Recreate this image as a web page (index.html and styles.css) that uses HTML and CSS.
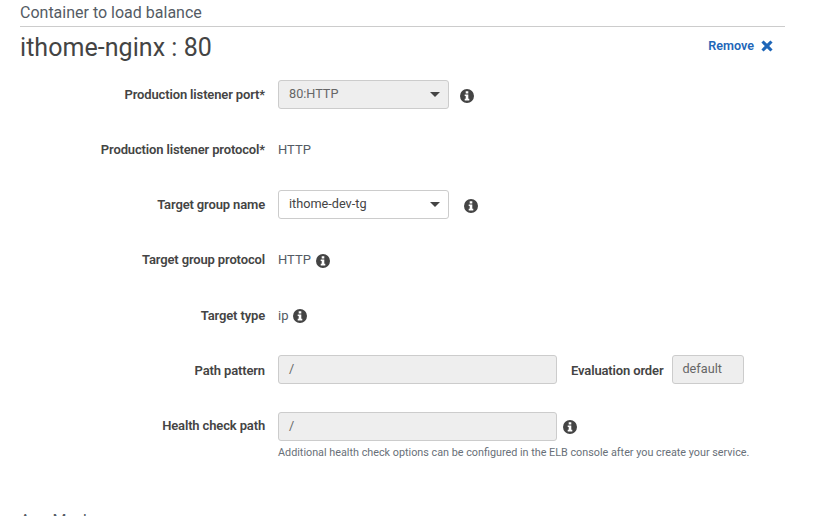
FILE: index.html
```html
<!DOCTYPE html>
<html lang="en">
<head>
  <meta charset="UTF-8">
  <meta name="viewport" content="width=device-width, initial-scale=1.0">
  <title>Container to load balance</title>
  <link rel="stylesheet" href="styles.css">
</head>
<body>
  <svg class="icon-defs" width="0" height="0" aria-hidden="true">
    <symbol id="info" viewBox="0 0 14 14">
      <path fill-rule="evenodd" d="M7 0a7 7 0 1 1 0 14A7 7 0 0 1 7 0zM5.7 2.2v2.2h2.6V2.2zM4.7 5.6v1.5h1v2.6h-1v1.8h4.6V9.7h-1V5.6z"/>
    </symbol>
  </svg>

  <section class="panel">
    <h3 class="panel-title">Container to load balance</h3>

    <div class="panel-head">
      <h2 class="container-name">ithome-nginx : 80</h2>
      <a class="remove" href="#">Remove
        <svg class="remove-icon" viewBox="0 0 12 12"><path d="M2.6 0.4 6 3.8 9.4 0.4 11.6 2.6 8.2 6 11.6 9.4 9.4 11.6 6 8.2 2.6 11.6 0.4 9.4 3.8 6 0.4 2.6z"/></svg>
      </a>
    </div>

    <div class="row row-port">
      <label class="row-label">Production listener port*</label>
      <div class="row-value">
        <div class="control select disabled">80:HTTP<span class="caret"></span></div>
        <svg class="info info-wide info-low"><use href="#info"/></svg>
      </div>
    </div>

    <div class="row row-protocol">
      <label class="row-label">Production listener protocol*</label>
      <div class="row-value">HTTP</div>
    </div>

    <div class="row row-group">
      <label class="row-label">Target group name</label>
      <div class="row-value">
        <div class="control select">ithome-dev-tg<span class="caret"></span></div>
        <svg class="info info-wider info-low"><use href="#info"/></svg>
      </div>
    </div>

    <div class="row row-group-protocol">
      <label class="row-label">Target group protocol</label>
      <div class="row-value">HTTP <svg class="info info-low"><use href="#info"/></svg></div>
    </div>

    <div class="row row-type">
      <label class="row-label">Target type</label>
      <div class="row-value">ip <svg class="info"><use href="#info"/></svg></div>
    </div>

    <div class="row row-path">
      <label class="row-label">Path pattern</label>
      <div class="row-value">
        <div class="control input disabled">/</div>
        <label class="inline-label">Evaluation order</label>
        <div class="control order disabled">default</div>
      </div>
    </div>

    <div class="row row-health">
      <label class="row-label">Health check path</label>
      <div class="row-value">
        <div class="control input disabled">/</div>
        <svg class="info info-health"><use href="#info"/></svg>
      </div>
    </div>
    <p class="help">Additional health check options can be configured in the ELB console after you create your service.</p>

    <h3 class="next-title">App Mesh</h3>
  </section>
</body>
</html>
```

FILE: styles.css
```css
html, body {
  height: 516px;
  overflow: hidden;
}
body {
  margin: 0;
  background: #fff;
  color: #444;
  font-family: Roboto, "Liberation Sans", sans-serif;
  font-size: 13px;
}
.icon-defs {
  display: block;
}
.panel {
  width: 765px;
  margin-left: 20px;
}
.panel-title {
  margin: 0;
  height: 26px;
  border-bottom: 1px solid #ccc;
  font-size: 16px;
  font-weight: 400;
  line-height: 25px;
  color: #545b64;
}
.panel-head {
  display: flex;
  justify-content: space-between;
  align-items: center;
  height: 38px;
  padding-right: 12px;
}
.container-name {
  margin: 2px 0 0;
  font-size: 25px;
  font-weight: 400;
  letter-spacing: 0.05px;
  color: #444;
}
.remove {
  display: flex;
  align-items: center;
  gap: 7px;
  margin-top: -1px;
  color: #1e66b8;
  font-weight: 600;
  font-size: 12.6px;
  text-decoration: none;
}
.remove-icon {
  width: 12px;
  height: 12px;
  fill: #1e66b8;
}
.row {
  display: flex;
  align-items: center;
  height: 29px;
}
.row-label {
  width: 245px;
  margin-right: 13px;
  text-align: right;
  font-weight: 600;
  letter-spacing: -0.14px;
  color: #444;
}
.row-value {
  display: flex;
  align-items: center;
  color: #545b64;
}
.row-port { margin-top: 15px; }
.row-protocol { margin-top: 26px; }
.row-group { margin-top: 26px; }
.row-group-protocol { margin-top: 26px; }
.row-type { margin-top: 27px; }
.row-path { margin-top: 25px; }
.row-path .row-label { margin-top: 1px; }
.row-health { margin-top: 28px; }
.row-health .row-label { margin-top: -2px; }

.control {
  box-sizing: border-box;
  height: 29px;
  padding: 0 10px;
  border: 1px solid #ccc;
  border-radius: 3px;
  font-size: 12.7px;
  line-height: 25px;
  color: #444;
}
.control.disabled {
  background: #eee;
  color: #666;
}
.select {
  position: relative;
  width: 171px;
}
.caret {
  position: absolute;
  right: 8px;
  top: 11px;
  border-top: 5px solid #444;
  border-left: 5px solid transparent;
  border-right: 5px solid transparent;
}
.input {
  width: 279px;
}
.order {
  width: 72px;
  padding: 0 9px;
}
.inline-label {
  margin: 1px 9px 0 14px;
  font-weight: 600;
  letter-spacing: -0.14px;
  color: #444;
}
.info {
  width: 14px;
  height: 14px;
  margin-left: 5px;
  fill: #444;
}
.info-wide { margin-left: 11px; }
.info-wider { margin-left: 15px; }
.info-low { margin-top: 3px; }
.info-health { margin-left: 6px; }
.help {
  margin: 5px 0 0 258px;
  font-size: 10.8px;
  line-height: 14px;
  color: #687078;
}
.next-title {
  margin: 51px 0 0;
  font-size: 16px;
  font-weight: 400;
  color: #545b64;
}
```
